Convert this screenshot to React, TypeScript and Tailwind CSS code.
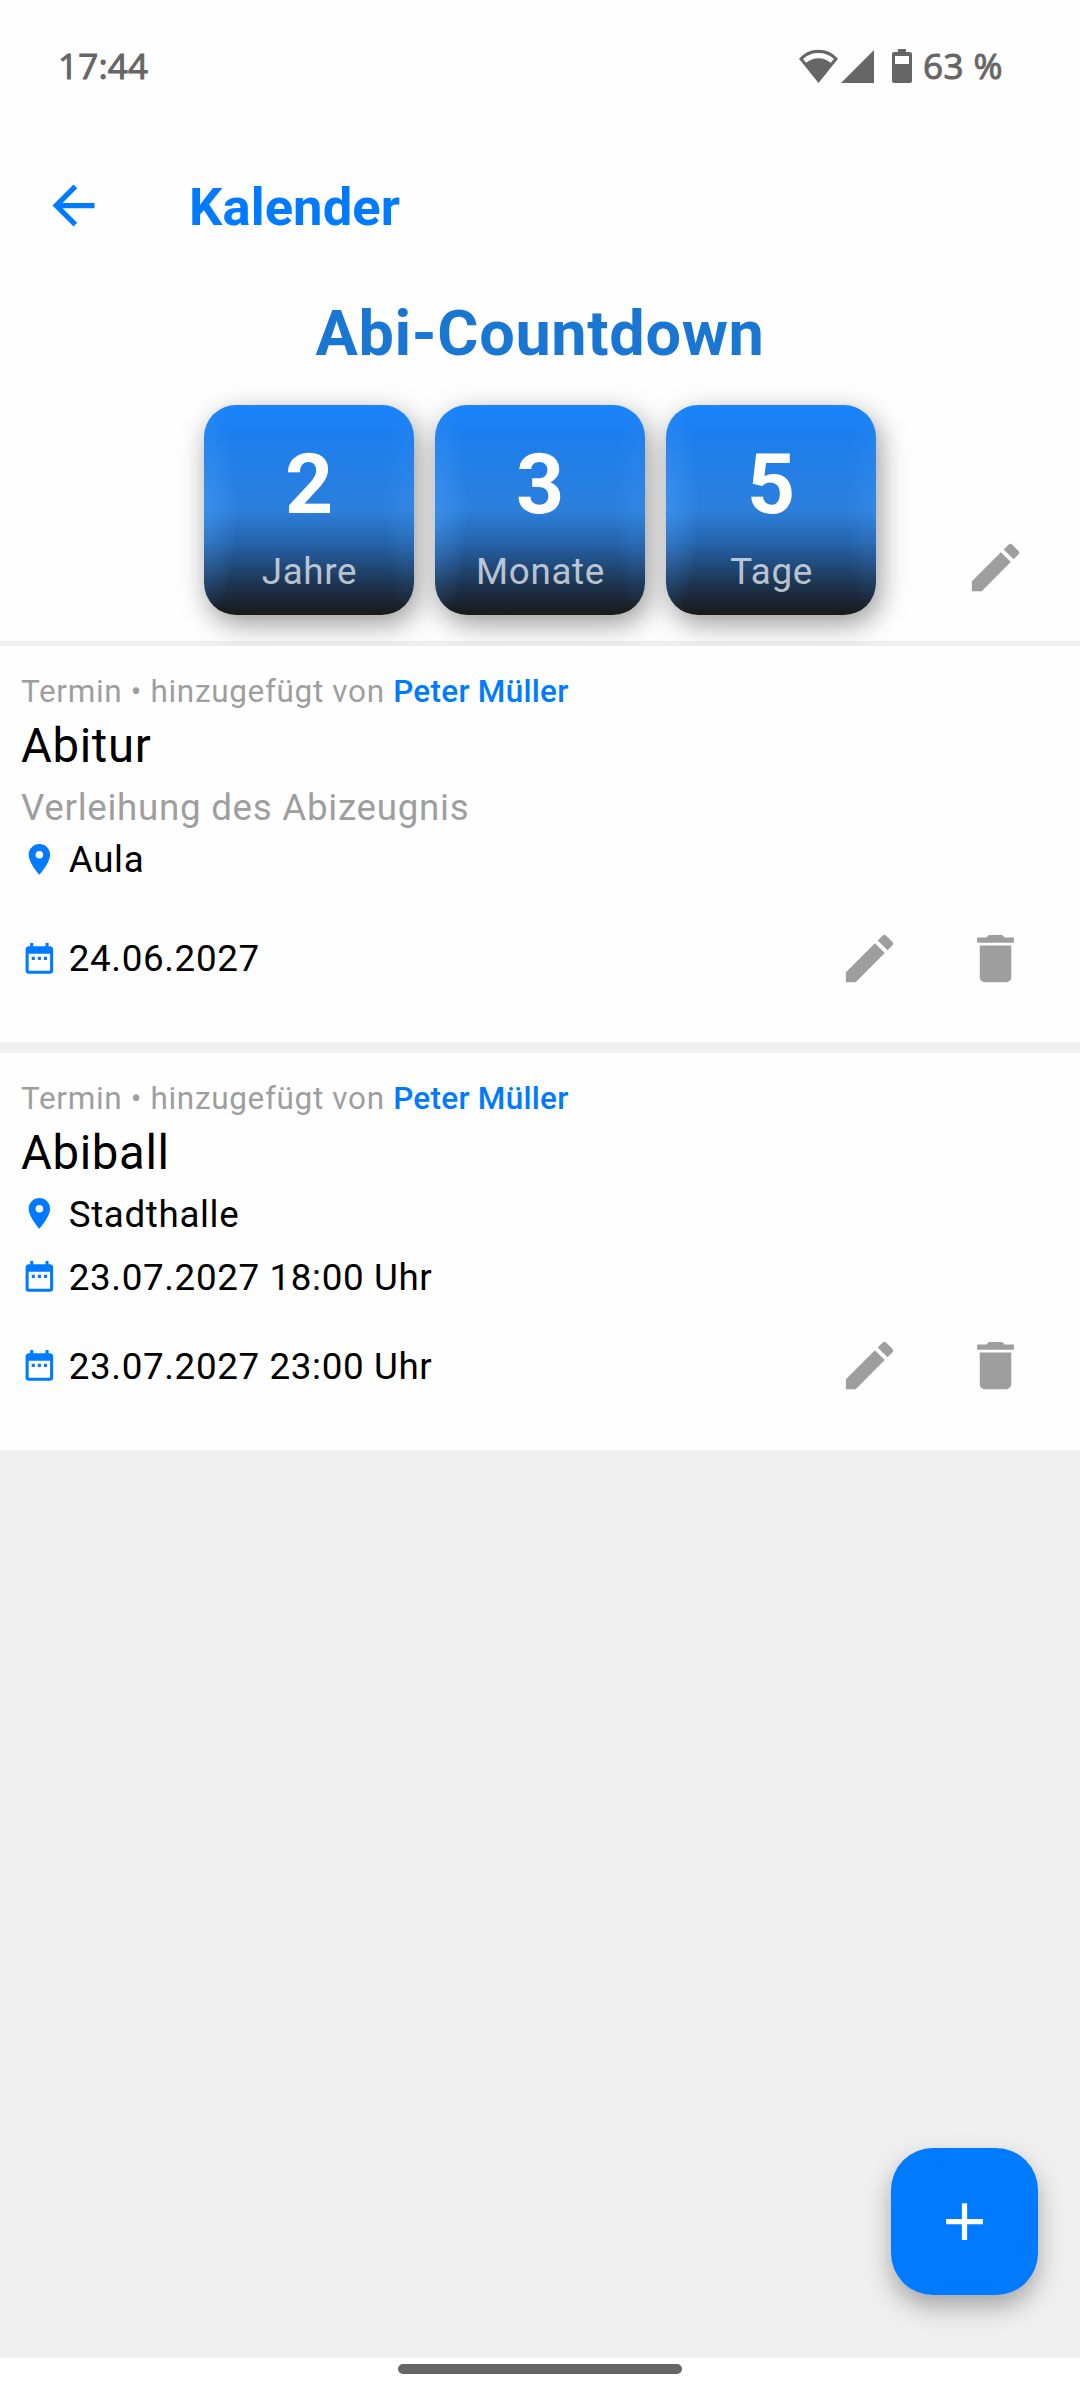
import type { ReactNode } from 'react';
import { MdAdd, MdArrowBack, MdDateRange, MdDelete, MdEdit, MdPlace } from 'react-icons/md';

interface CalendarEvent {
  title: string;
  author: string;
  description?: string;
  location: string;
  start?: string;
  end: string;
}

const countdown = [
  { value: 2, unit: 'Jahre' },
  { value: 3, unit: 'Monate' },
  { value: 5, unit: 'Tage' },
];

const events: CalendarEvent[] = [
  {
    title: 'Abitur',
    author: 'Peter Müller',
    description: 'Verleihung des Abizeugnis',
    location: 'Aula',
    end: '24.06.2027',
  },
  {
    title: 'Abiball',
    author: 'Peter Müller',
    location: 'Stadthalle',
    start: '23.07.2027 18:00 Uhr',
    end: '23.07.2027 23:00 Uhr',
  },
];

function StatusBar() {
  return (
    <div className="flex h-[132px] shrink-0 items-center justify-between pl-[58px] pr-[76px] font-['Open_Sans',sans-serif] text-[35px] text-[#666666] [-webkit-text-stroke:1px_#666666]">
      <span className="tracking-[0.2px]">17:44</span>
      <div className="flex items-center">
        <svg className="h-[34px] w-[39px]" viewBox="0 0 39 34" fill="currentColor">
          <path fillRule="evenodd" d="M19.5 34 0 9.8C5.2 4 11.8 0.8 19.5 0.8S33.8 4 39 9.8ZM7.2 13.8C10.5 11 14.8 9.2 19.5 9.2S28.5 11 31.8 13.8L35 10C30.5 6 25.4 4.1 19.5 4.1S8.5 6 4 10Z" />
        </svg>
        <svg className="ml-[3px] h-[33px] w-[33px]" viewBox="0 0 33 33" fill="currentColor">
          <path d="M33 0V33H0Z" />
        </svg>
        <svg className="ml-[18px] h-[34px] w-[20px]" viewBox="0 0 20 34" fill="currentColor">
          <path fillRule="evenodd" d="M6 0H14V3H18Q20 3 20 5V32Q20 34 18 34H2Q0 34 0 32V5Q0 3 2 3H6ZM3 7V15H17V7Z" />
        </svg>
        <span className="ml-[11px] w-[81px] tracking-[0.5px] whitespace-nowrap">63 %</span>
      </div>
    </div>
  );
}

function CountdownTile({ value, unit }: { value: number; unit: string }) {
  return (
    <div className="flex size-[210px] flex-col items-center rounded-[32px] bg-[radial-gradient(34px_120px_at_0%_48%,rgba(80,165,255,0.4),transparent),radial-gradient(30px_120px_at_100%_48%,rgba(80,165,255,0.2),transparent),linear-gradient(to_bottom,#1a84fe_0%,#1b7eee_14%,#2c80dc_50%,#2565ae_65%,#1d3553_85%,#191919_100%)] pt-[31px] shadow-[4px_9px_28px_rgba(0,0,0,0.4)]">
      <span className="text-[84px] leading-[98px] font-bold text-white">{value}</span>
      <span className="mt-[16px] pl-px text-[36.75px] leading-[43px] tracking-[0.66px] text-white/70">{unit}</span>
    </div>
  );
}

function InfoRow({ icon, children }: { icon: ReactNode; children: ReactNode }) {
  return (
    <div className="flex h-[44px] items-center gap-[11px] text-[36.75px] tracking-[0.64px] text-black">
      <span className="text-[#007aff]">{icon}</span>
      <span className="pt-[2px] leading-[42px]">{children}</span>
    </div>
  );
}

function EventCard({ event }: { event: CalendarEvent }) {
  return (
    <article className="bg-[#fefefe] pt-[28px] pr-[53px] pb-[21px] pl-[21px]">
      <p className="text-[31.5px] leading-[36px] tracking-[0.66px] text-[#9e9e9e]">
        Termin • hinzugefügt von <span className="font-medium tracking-[0.26px] text-[#007aff]">{event.author}</span>
      </p>
      <h2 className="mt-[8px] text-[47.25px] leading-[56px] tracking-[0.66px] text-black">{event.title}</h2>
      {event.description && (
        <p className="mt-[13px] mb-[8px] text-[36.75px] leading-[42px] tracking-[0.7px] text-[#9e9e9e]">{event.description}</p>
      )}
      <div className={event.description ? '' : 'mt-[11px]'}>
        <InfoRow icon={<MdPlace size={36.75} />}>{event.location}</InfoRow>
      </div>
      {event.start && (
        <div className="mt-[19px] -mb-[10px]">
          <InfoRow icon={<MdDateRange size={36.75} />}>{event.start}</InfoRow>
        </div>
      )}
      <div className="mt-[14px] flex h-[126px] items-center justify-between">
        <InfoRow icon={<MdDateRange size={36.75} />}>{event.end}</InfoRow>
        <div className="flex gap-[63px] text-[#9e9e9e]">
          <MdEdit size={63} />
          <MdDelete size={63} />
        </div>
      </div>
    </article>
  );
}

export default function App() {
  return (
    <div className="relative flex h-[2400px] w-[1080px] flex-col overflow-hidden bg-[#fefefe] font-[Roboto,sans-serif]">
      <StatusBar />

      <header className="flex h-[147px] shrink-0 items-center pl-[42px] text-[#007aff]">
        <MdArrowBack size={63} />
        <h1 className="ml-[84px] pt-[3px] text-[52.5px] font-bold tracking-[0.1px]">Kalender</h1>
      </header>

      {/* Countdown */}
      <section className="shrink-0 border-b-[5px] border-[#efefef] pt-[18px] pb-[26.25px]">
        <h2 className="text-center text-[63px] leading-[74px] font-bold tracking-[0.66px] text-[#1976d2]">Abi-Countdown</h2>
        <div className="mt-[34px] grid grid-cols-[1fr_auto_1fr] items-end">
          <div />
          <div className="flex gap-[21px]">
            {countdown.map(c => (
              <CountdownTile key={c.unit} value={c.value} unit={c.unit} />
            ))}
          </div>
          <MdEdit size={63} className="mr-[53px] mb-[16px] justify-self-end text-[#9e9e9e]" />
        </div>
      </section>

      {/* Event list */}
      <main className="flex grow flex-col gap-[10.5px] bg-[#efefef]">
        {events.map(e => (
          <EventCard key={e.title} event={e} />
        ))}
      </main>

      <button className="absolute right-[42px] bottom-[105px] flex size-[147px] items-center justify-center rounded-[42px] bg-[#007aff] text-white shadow-[0_12px_24px_rgba(0,0,0,0.3)]">
        <MdAdd size={63} />
      </button>

      {/* Gesture bar */}
      <footer className="flex h-[42px] shrink-0 items-start justify-center bg-white pt-[6px]">
        <div className="h-[10px] w-[284px] rounded-full bg-[#666666]" />
      </footer>
    </div>
  );
}
